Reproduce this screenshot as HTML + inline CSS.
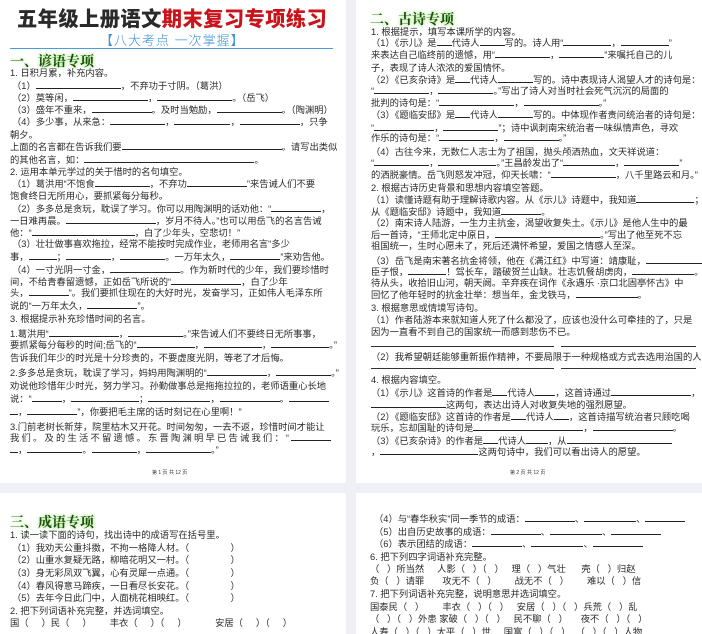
<!DOCTYPE html>
<html><head><meta charset="utf-8">
<style>
*{margin:0;padding:0;box-sizing:border-box}
body{width:702px;height:634px;background:#eef0f5;position:relative;overflow:hidden;font-family:"Liberation Sans","Noto Sans CJK SC",sans-serif;color:#2a2a2a}
.pg{position:absolute;background:#fff;overflow:hidden}
.l{position:absolute;font-size:9.3px;line-height:12px;white-space:nowrap}
i{display:inline-block;border-bottom:1px solid #222;height:9px;font-style:normal;vertical-align:baseline}
.h{position:absolute;font-size:14px;font-weight:bold;color:#1e4d0f;text-shadow:0 0 3px #a6ec86,0 0 5px #c4f3ad;white-space:nowrap;font-family:"Noto Serif CJK SC","Noto Sans CJK SC",serif}
.pn{position:absolute;font-size:5px;color:#333;white-space:nowrap}
</style></head><body>

<!-- page 1 -->
<div class="pg" style="left:0;top:0;width:346px;height:483px">
<div style="position:absolute;left:17px;top:5px;font-size:20.3px;font-weight:900;white-space:nowrap;font-family:'Noto Sans CJK SC',sans-serif;line-height:24px;letter-spacing:0.4px">五年级上册语文<span style="color:#c8141a">期末复习专项练习</span></div>
<div style="position:absolute;left:100px;top:33px;font-size:13px;color:#3b8fd6;white-space:nowrap;line-height:15px;letter-spacing:1px;font-weight:300">【八大考点 一次掌握】</div>
<div style="position:absolute;left:10px;top:48px;width:323px;height:1px;background:#4a9be0"></div>
<div class="h" style="left:10px;top:51px">一、谚语专项</div>
<div class="l" style="left:10px;top:67px">1. 日积月累，补充内容。</div>
<div class="l" style="left:12px;top:80px">（1）<i style="width:85px"></i>，不弃功于寸阴。（葛洪）</div>
<div class="l" style="left:12px;top:92px">（2）莫等闲，<i style="width:75px"></i>，<i style="width:75px"></i>。（岳飞）</div>
<div class="l" style="left:12px;top:104px">（3）盛年不重来，<i style="width:60px"></i>。及时当勉励，<i style="width:65px"></i>。（陶渊明）</div>
<div class="l" style="left:12px;top:116px">（4）多少事，从来急：<i style="width:55px"></i>，<i style="width:56px"></i>，<i style="width:60px"></i>，只争</div>
<div class="l" style="left:10px;top:129px">朝夕。</div>
<div class="l" style="left:10px;top:141px">上面的名言都在告诉我们要<i style="width:160px"></i>。请写出类似</div>
<div class="l" style="left:10px;top:154px">的其他名言，如：<i style="width:170px"></i>。</div>
<div class="l" style="left:10px;top:166px">2. 运用本单元学过的关于惜时的名句填空。</div>
<div class="l" style="left:12px;top:178px">（1）葛洪用“不饱食<i style="width:55px"></i>，不弃功<i style="width:60px"></i>”来告诫人们不要</div>
<div class="l" style="left:10px;top:190px">饱食终日无所用心，要抓紧每分每秒。</div>
<div class="l" style="left:12px;top:203px">（2）多多总是贪玩，耽误了学习。你可以用陶渊明的话劝他：“<i style="width:50px"></i>，</div>
<div class="l" style="left:10px;top:215px">一日难再晨。<i style="width:90px"></i>，岁月不待人。”也可以用岳飞的名言告诫</div>
<div class="l" style="left:10px;top:227px">他：“<i style="width:103px"></i>，白了少年头，空悲切！”</div>
<div class="l" style="left:12px;top:238px">（3）壮壮做事喜欢拖拉，经常不能按时完成作业，老师用名言“多少</div>
<div class="l" style="left:10px;top:251px">事，<i style="width:28px"></i>；<i style="width:45px"></i>，<i style="width:45px"></i>。一万年太久，<i style="width:50px"></i>”来劝告他。</div>
<div class="l" style="left:12px;top:264px">（4）一寸光阴一寸金，<i style="width:70px"></i>。作为新时代的少年，我们要珍惜时</div>
<div class="l" style="left:10px;top:276px">间，不给青春留遗憾，正如岳飞所说的“<i style="width:70px"></i>，白了少年</div>
<div class="l" style="left:10px;top:287px">头，<i style="width:40px"></i>”。我们要抓住现在的大好时光，发奋学习，正如伟人毛泽东所</div>
<div class="l" style="left:10px;top:300px">说的“一万年太久，<i style="width:50px"></i>”。</div>
<div class="l" style="left:10px;top:313px">3. 根据提示补充珍惜时间的名言。</div>
<div class="l" style="left:10px;top:328px">1.葛洪用“<i style="width:70px"></i>，<i style="width:55px"></i>。”来告诫人们不要终日无所事事，</div>
<div class="l" style="left:10px;top:339px">要抓紧每分每秒的时间;岳飞的“<i style="width:58px"></i>，<i style="width:58px"></i>，<i style="width:58px"></i>。”</div>
<div class="l" style="left:10px;top:352px">告诉我们年少的时光是十分珍贵的，不要虚度光阴，等老了才后悔。</div>
<div class="l" style="left:10px;top:367px">2.多多总是贪玩，耽误了学习，妈妈用陶渊明的“<i style="width:60px"></i>，<i style="width:55px"></i>。”</div>
<div class="l" style="left:10px;top:380px">劝说他珍惜年少时光，努力学习。孙勤做事总是拖拖拉拉的，老师语重心长地</div>
<div class="l" style="left:10px;top:393px">说：“<i style="width:30px"></i>，<i style="width:68px"></i>；<i style="width:62px"></i>，<i style="width:60px"></i>。<i style="width:40px"></i></div>
<div class="l" style="left:10px;top:406px"><i style="width:8px"></i>，<i style="width:50px"></i>”，你要把毛主席的话时刻记在心里啊！”</div>
<div class="l" style="left:10px;top:421px">3.门前老树长新芽，院里枯木又开花。时间匆匆，一去不返，珍惜时间才能让</div>
<div class="l" style="left:10px;top:432px;letter-spacing:2.2px">我们。及的生活不留遗憾。东晋陶渊明早已告诫我们：“<i style="width:40px"></i></div>
<div class="l" style="left:10px;top:444px"><i style="width:8px"></i>，<i style="width:55px"></i>。<i style="width:45px"></i>，<i style="width:65px"></i>。”</div>
<div class="pn" style="left:152px;top:469px">第 1 页 共 12 页</div>
</div>

<!-- page 2 -->
<div class="pg" style="left:356px;top:0;width:346px;height:483px">
<div class="h" style="left:14px;top:9px">二、古诗专项</div>
<div class="l" style="left:15px;top:26px">1. 根据提示，填写本课所学的内容。</div>
<div class="l" style="left:15px;top:37px">（1）《示儿》是<i style="width:15px"></i>代诗人<i style="width:25px"></i>写的。诗人用“<i style="width:48px"></i>，<i style="width:48px"></i>”</div>
<div class="l" style="left:15px;top:49px">来表达自己临终前的遗憾，用“<i style="width:55px"></i>，<i style="width:45px"></i>”来嘱托自己的儿</div>
<div class="l" style="left:15px;top:62px">子，表现了诗人浓浓的爱国情怀。</div>
<div class="l" style="left:15px;top:74px">（2）《已亥杂诗》是<i style="width:15px"></i>代诗人<i style="width:35px"></i>写的。诗中表现诗人渴望人才的诗句是：</div>
<div class="l" style="left:15px;top:85px">“<i style="width:55px"></i>，<i style="width:55px"></i>。”写出了诗人对当时社会死气沉沉的局面的</div>
<div class="l" style="left:15px;top:97px">批判的诗句是：“<i style="width:75px"></i>，<i style="width:75px"></i>。”</div>
<div class="l" style="left:15px;top:109px">（3）《题临安邸》是<i style="width:15px"></i>代诗人<i style="width:35px"></i>写的。中体现作者责问统治者的诗句是：</div>
<div class="l" style="left:15px;top:122px">“<i style="width:60px"></i>，<i style="width:55px"></i>”；诗中讽刺南宋统治者一味纵情声色，寻欢</div>
<div class="l" style="left:15px;top:132px">作乐的诗句是：“<i style="width:55px"></i>，<i style="width:55px"></i>。”</div>
<div class="l" style="left:15px;top:146px">（4）古往今来，无数仁人志士为了祖国，抛头颅洒热血，文天祥说道：</div>
<div class="l" style="left:15px;top:157px">“<i style="width:55px"></i>，<i style="width:58px"></i>。”王昌龄发出了“<i style="width:52px"></i>，<i style="width:55px"></i>”</div>
<div class="l" style="left:15px;top:169px">的洒脱豪情。岳飞则怒发冲冠，仰天长啸：“<i style="width:65px"></i>，八千里路云和月。”</div>
<div class="l" style="left:15px;top:182px">2. 根据古诗历史背景和思想内容填空答题。</div>
<div class="l" style="left:15px;top:194px">（1）读懂诗题有助于理解诗歌内容。从《示儿》诗题中，我知道<i style="width:58px"></i>；</div>
<div class="l" style="left:15px;top:206px">从《题临安邸》诗题中，我知道<i style="width:40px"></i>。</div>
<div class="l" style="left:15px;top:217px">（2）南宋诗人陆游，一生力主抗金，渴望收复失土。《示儿》是他人生中的最</div>
<div class="l" style="left:15px;top:229px">后一首诗，“王师北定中原日，<i style="width:105px"></i>。”写出了他至死不忘</div>
<div class="l" style="left:15px;top:240px">祖国统一，生时心愿未了，死后还满怀希望，爱国之情感人至深。</div>
<div class="l" style="left:15px;top:255px">（3）岳飞是南宋著名抗金将领，他在《满江红》中写道：靖康耻，<i style="width:60px"></i>。</div>
<div class="l" style="left:15px;top:266px">臣子恨，<i style="width:38px"></i>！驾长车，踏破贺兰山缺。壮志饥餐胡虏肉，<i style="width:62px"></i>。</div>
<div class="l" style="left:15px;top:277px">待从头，收拾旧山河，朝天阙。辛弃疾在词作《永遇乐 ·京口北固亭怀古》中</div>
<div class="l" style="left:15px;top:289px">回忆了他年轻时的抗金壮举：想当年，金戈铁马，<i style="width:62px"></i>。</div>
<div class="l" style="left:15px;top:302px">3. 根据意思或情境写诗句。</div>
<div class="l" style="left:15px;top:314px">（1）作者陆游本来就知道人死了什么都没了，应该也没什么可牵挂的了，只是</div>
<div class="l" style="left:15px;top:326px">因为一直看不到自己的国家统一而感到悲伤不已。</div>
<div style="position:absolute;left:15px;top:346px;width:183px;height:1px;background:#333"></div>
<div style="position:absolute;left:205px;top:346px;width:135px;height:1px;background:#333"></div>
<div class="l" style="left:15px;top:351px">（2）我希望朝廷能够重新振作精神，不要局限于一种规格或方式去选用治国的人才。</div>
<div style="position:absolute;left:15px;top:368px;width:183px;height:1px;background:#333"></div>
<div style="position:absolute;left:205px;top:368px;width:135px;height:1px;background:#333"></div>
<div class="l" style="left:15px;top:374px">4. 根据内容填空。</div>
<div class="l" style="left:15px;top:387px">（1）《示儿》这首诗的作者是<i style="width:15px"></i>代诗人<i style="width:20px"></i>，这首诗通过<i style="width:80px"></i>，</div>
<div class="l" style="left:15px;top:399px"><i style="width:75px"></i>这两句，表达出诗人对收复失地的强烈愿望。</div>
<div class="l" style="left:15px;top:411px">（2）《题临安邸》这首诗的作者是<i style="width:15px"></i>代诗人<i style="width:15px"></i>，这首诗描写统治者只顾吃喝</div>
<div class="l" style="left:15px;top:422px">玩乐，忘却国耻的诗句是<i style="width:110px"></i>，<i style="width:80px"></i>。</div>
<div class="l" style="left:15px;top:435px">（3）《已亥杂诗》的作者是<i style="width:15px"></i>代诗人<i style="width:22px"></i>，从<i style="width:105px"></i></div>
<div class="l" style="left:15px;top:446px">，<i style="width:98px"></i>这两句诗中，我们可以看出诗人的愿望。</div>
<div class="pn" style="left:154px;top:469px">第 2 页 共 12 页</div>
</div>

<!-- page 3 -->
<div class="pg" style="left:0;top:493px;width:346px;height:141px">
<div class="h" style="left:10px;top:19px">三、成语专项</div>
<div class="l" style="left:10px;top:36px">1. 读一读下面的诗句，找出诗中的成语写在括号里。</div>
<div class="l" style="left:12px;top:49px">（1）我劝天公重抖擞，不拘一格降人材。（ &nbsp; &nbsp; &nbsp; &nbsp; &nbsp; &nbsp; &nbsp; &nbsp;）</div>
<div class="l" style="left:12px;top:61px">（2）山重水复疑无路，柳暗花明又一村。（ &nbsp; &nbsp; &nbsp; &nbsp; &nbsp; &nbsp; &nbsp; &nbsp;）</div>
<div class="l" style="left:12px;top:74px">（3）身无彩凤双飞翼，心有灵犀一点通。（ &nbsp; &nbsp; &nbsp; &nbsp; &nbsp; &nbsp; &nbsp; &nbsp;）</div>
<div class="l" style="left:12px;top:87px">（4）春风得意马蹄疾，一日看尽长安花。（ &nbsp; &nbsp; &nbsp; &nbsp; &nbsp; &nbsp; &nbsp; &nbsp;）</div>
<div class="l" style="left:12px;top:99px">（5）去年今日此门中，人面桃花相映红。（ &nbsp; &nbsp; &nbsp; &nbsp; &nbsp; &nbsp; &nbsp; &nbsp;）</div>
<div class="l" style="left:10px;top:112px">2. 把下列词语补充完整，并选词填空。</div>
<div class="l" style="left:10px;top:124px">国（ &nbsp; &nbsp; ）民（ &nbsp; &nbsp; ） &nbsp; &nbsp; &nbsp; 丰衣（ &nbsp; &nbsp; ）（ &nbsp; &nbsp; ） &nbsp; &nbsp; &nbsp; &nbsp; &nbsp; 安居（ &nbsp; &nbsp; ）（ &nbsp; &nbsp; ）</div>
</div>

<!-- page 4 -->
<div class="pg" style="left:356px;top:493px;width:346px;height:141px">
<div class="l" style="left:18px;top:20px">（4）与“春华秋实”同一季节的成语：<i style="width:50px"></i>、<i style="width:52px"></i>、<i style="width:40px"></i></div>
<div class="l" style="left:18px;top:33px">（5）出自历史故事的成语：<i style="width:50px"></i>、<i style="width:52px"></i>、<i style="width:50px"></i></div>
<div class="l" style="left:18px;top:45px">（6）表示团结的成语：<i style="width:50px"></i>、<i style="width:52px"></i>、<i style="width:50px"></i></div>
<div class="l" style="left:14px;top:58px">6. 把下列四字词语补充完整。</div>
<div class="l" style="left:14px;top:70px">（ &nbsp; ）所当然 &nbsp; &nbsp; 人影（ &nbsp; ）（ &nbsp; ） &nbsp; 理（ &nbsp; ）气壮 &nbsp; &nbsp; &nbsp;壳（ &nbsp; ）归赵</div>
<div class="l" style="left:14px;top:82px">负（ &nbsp; ）请罪 &nbsp; &nbsp; &nbsp; 攻无不（ &nbsp; ） &nbsp; &nbsp; &nbsp; 战无不（ &nbsp; ） &nbsp; &nbsp; &nbsp; 难以（ &nbsp; ）信</div>
<div class="l" style="left:14px;top:95px">7. 把下列词语补充完整，说明意思并选词填空。</div>
<div class="l" style="left:14px;top:108px">国泰民（ &nbsp; ） &nbsp; &nbsp; &nbsp; 丰衣（ &nbsp; ）（ &nbsp; ） &nbsp; 安居（ &nbsp; ）（ &nbsp; ）兵荒（ &nbsp; ）乱</div>
<div class="l" style="left:14px;top:120px">（ &nbsp; ）（ &nbsp; ）外患 家破（ &nbsp; ）（ &nbsp; ） &nbsp; 民不聊（ &nbsp; ） &nbsp; &nbsp; 夜不（ &nbsp; ）（ &nbsp; ）</div>
<div class="l" style="left:14px;top:133px">人寿（ &nbsp; ）（ &nbsp; ）太平（ &nbsp; ）世 &nbsp; &nbsp; 国富（ &nbsp; ）（ &nbsp; ） &nbsp;（ &nbsp; ）（ &nbsp; ）人物</div>
</div>
</body></html>
